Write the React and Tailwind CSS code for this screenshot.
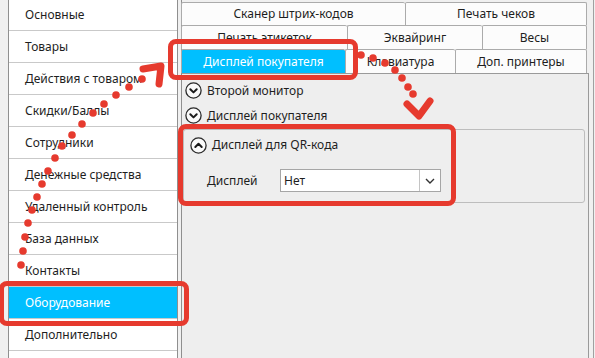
import React from "react";

const menu = [
  "Основные",
  "Товары",
  "Действия с товаром",
  "Скидки/Баллы",
  "Сотрудники",
  "Денежные средства",
  "Удаленный контроль",
  "База данных",
  "Контакты",
  "Оборудование",
  "Дополнительно",
  "",
];

const leftDots = [
  [142, 79], [129, 87], [116, 95], [104, 104], [93, 113], [82, 124], [72, 135],
  [62, 146], [55, 158], [48, 171], [42, 184], [37, 197], [32, 210], [28, 223],
  [25, 237], [23, 251], [21, 265],
];

const rightDots = [
  [361, 55], [373, 58], [385, 63], [395, 70], [402, 78], [408, 87], [413, 94],
];

const Circle = ({ up }) => (
  <svg width="17" height="17" viewBox="0 0 17 17" className="shrink-0">
    <circle cx="8.5" cy="8.5" r="7.6" fill="#fafafa" stroke="#2a2a2a" strokeWidth="1.3" />
    {up ? (
      <polyline points="5.3,10 8.5,6.8 11.7,10" fill="none" stroke="#1a1a1a" strokeWidth="2" strokeLinecap="round" strokeLinejoin="round" />
    ) : (
      <polyline points="5.3,7.2 8.5,10.4 11.7,7.2" fill="none" stroke="#1a1a1a" strokeWidth="2" strokeLinecap="round" strokeLinejoin="round" />
    )}
  </svg>
);

const Tab = ({ className, children, active }) => (
  <div
    className={`flex items-center justify-center border-t border-l border-[#ababab] rounded-t-[2px] ${
      active ? "bg-[#00bfff] text-white" : "bg-[#fcfcfc] text-[#1e1e1e]"
    } ${className}`}
  >
    {children}
  </div>
);

export default function App() {
  return (
    <div className="relative w-[595px] h-[358px] overflow-hidden bg-[#f0f0f0] flex font-['Noto_Sans',sans-serif] text-[12px] text-[#1e1e1e]">
      {/* left strip */}
      <div className="w-[8px] shrink-0" />

      {/* sidebar */}
      <div className="w-[170px] shrink-0 bg-white border-l border-r border-[#8f8f8f] flex flex-col -mt-[1px]">
        {menu.map((item) => (
          <div
            key={item || "empty"}
            className={`h-[32px] shrink-0 border-b border-[#c9c9c9] flex items-center pl-[16px] pt-[1px] ${
              item === "Оборудование" ? "bg-[#00bfff] text-white" : ""
            }`}
          >
            {item}
          </div>
        ))}
      </div>

      <div className="w-[3px] shrink-0" />

      {/* right side */}
      <div className="w-[408px] shrink-0 flex flex-col border-l border-[#8f8f8f]">
        <div className="pt-[2px] w-[406px] -ml-[1px]">
          <div className="flex h-[23px]">
            <Tab className="w-[224px]">Сканер штрих-кодов</Tab>
            <Tab className="w-[182px] border-r">Печать чеков</Tab>
          </div>
          <div className="flex h-[24px]">
            <Tab className="w-[166px]">Печать этикеток</Tab>
            <Tab className="w-[135px]">Эквайринг</Tab>
            <Tab className="w-[105px] border-r">Весы</Tab>
          </div>
          <div className="flex h-[24px]">
            <Tab className="w-[164px]" active>
              Дисплей покупателя
            </Tab>
            <Tab className="w-[110px]">Клавиатура</Tab>
            <Tab className="w-[132px] border-r">Доп. принтеры</Tab>
          </div>
        </div>

        <div className="flex-1 bg-[#eeeeee] border-t border-r border-[#9a9a9a] flex flex-col pt-[4px]">
          <div className="h-[25px] flex items-center pl-[3px] gap-[5px]">
            <Circle />
            <span>Второй монитор</span>
          </div>
          <div className="h-[25px] flex items-center pl-[3px] gap-[5px]">
            <Circle />
            <span>Дисплей покупателя</span>
          </div>

          <div className="mt-[1px] ml-[1px] mr-[3px] h-[74px] border border-[#bdbdbd] rounded-[3px] flex flex-col">
            <div className="mt-[3px] h-[24px] flex items-center pl-[6px] gap-[5px]">
              <Circle up />
              <span>Дисплей для QR-кода</span>
            </div>
            <div className="mt-[12px] flex items-center pl-[23px]">
              <span className="w-[73px]">Дисплей</span>
              <div className="w-[161px] h-[23px] bg-white border border-[#a6a6a6] flex items-center">
                <span className="flex-1 pl-[3px]">Нет</span>
                <div className="w-[21px] h-full border-l border-[#c4c4c4] flex items-center justify-center">
                  <svg width="10" height="6" viewBox="0 0 10 6">
                    <polyline points="1,1 5,5 9,1" fill="none" stroke="#333" strokeWidth="1.4" />
                  </svg>
                </div>
              </div>
            </div>
          </div>
        </div>
      </div>

      <div className="w-[5px] shrink-0 border-r border-[#a0a0a0]" />

      {/* annotations */}
      <div className="absolute left-[168px] top-[39px] w-[190px] h-[41px] border-[5px] border-[#e63a2e] rounded-[8px]" />
      <div className="absolute left-[-1px] top-[281px] w-[190px] h-[45px] border-[5px] border-[#e63a2e] rounded-[8px]" />
      <div className="absolute left-[178px] top-[124px] w-[278px] h-[82px] border-[5px] border-[#e63a2e] rounded-[8px]" />

      <svg className="absolute inset-0 pointer-events-none" width="595" height="358" viewBox="0 0 595 358">
        {leftDots.map(([x, y]) => (
          <circle key={`l${x}-${y}`} cx={x} cy={y} r="3.8" fill="#e63a2e" />
        ))}
        {rightDots.map(([x, y]) => (
          <circle key={`r${x}-${y}`} cx={x} cy={y} r="3.8" fill="#e63a2e" />
        ))}
        <polyline points="143,69 161,66 159,84" fill="none" stroke="#e63a2e" strokeWidth="7" strokeLinecap="round" strokeLinejoin="round" />
        <polyline points="407,104 419,116 430,101" fill="none" stroke="#e63a2e" strokeWidth="7" strokeLinecap="round" strokeLinejoin="round" />
      </svg>
    </div>
  );
}
